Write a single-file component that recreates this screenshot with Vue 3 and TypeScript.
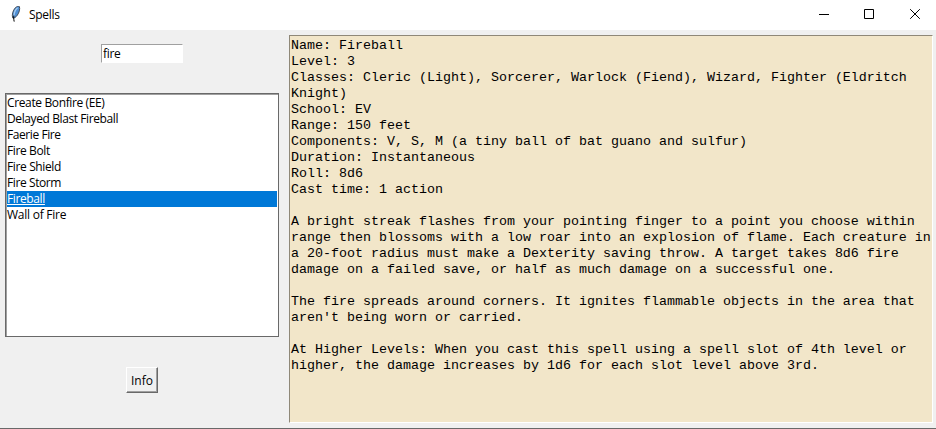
<script setup lang="ts">
import { ref } from 'vue'

interface Spell {
  name: string
  spacing: number
}

const query = ref<string>('fire')
const selected = ref<string>('Fireball')
const spells: Spell[] = [
  { name: 'Create Bonfire (EE)', spacing: -0.37 },
  { name: 'Delayed Blast Fireball', spacing: -0.4 },
  { name: 'Faerie Fire', spacing: -0.43 },
  { name: 'Fire Bolt', spacing: -0.38 },
  { name: 'Fire Shield', spacing: -0.37 },
  { name: 'Fire Storm', spacing: -0.4 },
  { name: 'Fireball', spacing: -0.38 },
  { name: 'Wall of Fire', spacing: -0.25 },
]

const details: string = [
  'Name: Fireball',
  'Level: 3',
  'Classes: Cleric (Light), Sorcerer, Warlock (Fiend), Wizard, Fighter (Eldritch',
  'Knight)',
  'School: EV',
  'Range: 150 feet',
  'Components: V, S, M (a tiny ball of bat guano and sulfur)',
  'Duration: Instantaneous',
  'Roll: 8d6',
  'Cast time: 1 action',
  '',
  'A bright streak flashes from your pointing finger to a point you choose within',
  'range then blossoms with a low roar into an explosion of flame. Each creature in',
  'a 20-foot radius must make a Dexterity saving throw. A target takes 8d6 fire',
  'damage on a failed save, or half as much damage on a successful one.',
  '',
  'The fire spreads around corners. It ignites flammable objects in the area that',
  "aren't being worn or carried.",
  '',
  'At Higher Levels: When you cast this spell using a spell slot of 4th level or',
  'higher, the damage increases by 1d6 for each slot level above 3rd.',
].join('\n')
</script>

<template>
  <div class="window">
    <header class="titlebar">
      <svg class="feather" width="16" height="16" viewBox="0 0 16 16">
        <path d="M4.6 11.8C3.8 8.6 4.8 4.6 7.2 1.9C8.6 0.5 10.6 -0.1 11.4 0.6C12.2 2.8 11.2 6.8 9.2 9.4C8 11 6.6 11.9 5.4 12.2Z" fill="#4f8fd4" stroke="#3a4048" stroke-width="0.9" />
        <path d="M6.1 10C6 6.6 7.3 3.8 9.6 1.8" fill="none" stroke="#a9cdf0" stroke-width="1.2" />
        <path d="M5.9 9.5C5.5 11 5.6 13 6.2 15.6" fill="none" stroke="#000" stroke-width="1" />
      </svg>
      <span class="title">Spells</span>
      <div class="controls">
        <svg width="46" height="30" viewBox="0 0 46 30"><path d="M18 14.5H28" stroke="#000" /></svg>
        <svg width="46" height="30" viewBox="0 0 46 30"><path d="M17.5 9.5H26.5V18.5H17.5Z" fill="none" stroke="#000" /></svg>
        <svg width="43" height="30" viewBox="0 0 43 30"><path d="M17.2 9.2L26.8 18.8M26.8 9.2L17.2 18.8" fill="none" stroke="#000" /></svg>
      </div>
    </header>
    <main class="body">
      <section class="left">
        <input v-model="query" class="search" type="text" spellcheck="false" />
        <ul class="list">
          <li v-for="s in spells" :key="s.name" :class="{ active: s.name === selected }" @click="selected = s.name">
            <span :style="{ letterSpacing: s.spacing + 'px' }">{{ s.name }}</span>
          </li>
        </ul>
        <button class="info" type="button">Info</button>
      </section>
      <pre class="details">{{ details }}</pre>
    </main>
  </div>
</template>

<style>
body {
  margin: 0;
  overflow: hidden;
}
</style>

<style scoped>
.window {
  box-sizing: border-box;
  width: 936px;
  height: 429px;
  display: flex;
  flex-direction: column;
  background: #f0f0f0;
  border-bottom: 1px solid #696969;
  font-family: 'Open Sans', 'Noto Sans', sans-serif;
  font-size: 12px;
  color: #000;
}
.titlebar {
  height: 30px;
  flex: none;
  display: flex;
  align-items: center;
  background: #fff;
  padding-left: 8px;
}
.feather {
  display: block;
  margin-top: -2px;
}
.title {
  margin-left: 5px;
  letter-spacing: -0.3px;
  line-height: 16px;
}
.controls {
  margin-left: auto;
  display: flex;
}
.controls svg {
  display: block;
}
.body {
  flex: 1;
  display: flex;
  min-height: 0;
}
.left {
  width: 289px;
  flex: none;
  display: flex;
  flex-direction: column;
}
.search {
  box-sizing: border-box;
  width: 82px;
  height: 19px;
  margin: 14px 0 0 101px;
  padding: 0 1px;
  border: 1px solid #fff;
  border-top-color: #a0a0a0;
  border-left-color: #a0a0a0;
  border-radius: 0;
  background: #fff;
  font: inherit;
  letter-spacing: -0.3px;
  outline: none;
}
.list {
  box-sizing: border-box;
  width: 274px;
  height: 244px;
  margin: 30px 0 0 5px;
  list-style: none;
  background: #fff;
  border: 1px solid #696969;
  box-shadow: inset 1px 1px #a0a0a0;
  padding: 1px;
}
.list li {
  height: 16px;
  line-height: 16px;
  white-space: pre;
}
.list li.active {
  background: #0078d7;
  color: #fff;
  text-decoration: underline;
  text-decoration-thickness: 1px;
  text-underline-offset: 1px;
  text-decoration-skip-ink: none;
}
.info {
  box-sizing: border-box;
  width: 32px;
  height: 26px;
  margin: 30px 0 0 126px;
  padding: 0;
  background: #f0f0f0;
  border: 1px solid #fff;
  border-right-color: #696969;
  border-bottom-color: #696969;
  border-radius: 0;
  box-shadow: inset -1px -1px #a0a0a0;
  font: inherit;
  color: #000;
}
.details {
  box-sizing: border-box;
  width: 644px;
  height: 388px;
  margin: 5px 0 0;
  padding: 2px 0 0 1px;
  background: #f2e6c9;
  border: 1px solid #fff;
  border-top-color: #8f8878;
  border-left-color: #8f8878;
  font-family: 'Liberation Mono', monospace;
  font-size: 13.333px;
  line-height: 16px;
}
</style>
